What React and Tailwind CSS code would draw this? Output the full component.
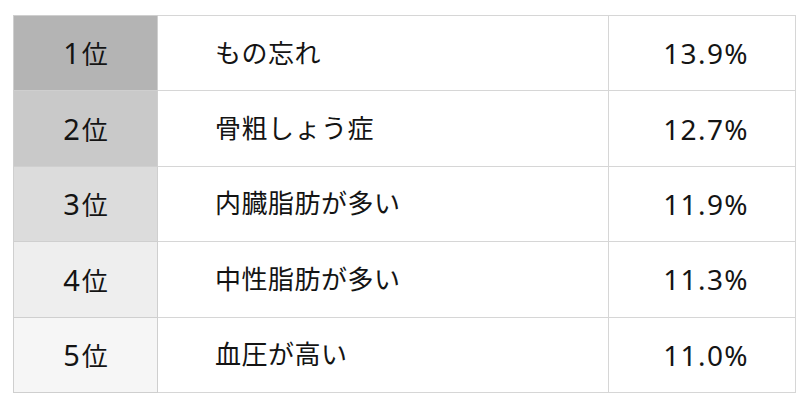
const rows = [
  { rank: '1', name: 'もの忘れ', value: '13.9%', bg: 'bg-[#b4b4b4]' },
  { rank: '2', name: '骨粗しょう症', value: '12.7%', bg: 'bg-[#c9c9c9]' },
  { rank: '3', name: '内臓脂肪が多い', value: '11.9%', bg: 'bg-[#dcdcdc]' },
  { rank: '4', name: '中性脂肪が多い', value: '11.3%', bg: 'bg-[#eeeeee]' },
  { rank: '5', name: '血圧が高い', value: '11.0%', bg: 'bg-[#f6f6f6]' },
]

export default function App() {
  return (
    <div className="w-[808px] h-[408px] bg-white pt-[15px] pl-[13px] font-['Noto_Sans','Noto_Sans_CJK_JP',sans-serif] text-[#141414]">
      <table className="border-collapse w-[782px] table-fixed">
        <colgroup>
          <col className="w-[144px]" />
          <col className="w-[451px]" />
          <col className="w-[187px]" />
        </colgroup>
        <tbody>
          {rows.map((r) => (
            <tr key={r.rank} className="h-[75.4px]">
              <td className={`border border-[#cfcfcf] ${r.bg} text-center text-[26px]`}>
                <span className="text-[29px] tracking-[0.06em]">{r.rank}</span>位
              </td>
              <td className="border border-[#d6d6d6] pl-[57px] text-[26px] tracking-[0.02em]">
                {r.name}
              </td>
              <td className="border border-[#d6d6d6] text-right pr-[46px] text-[28px] tracking-[0.05em]">
                {r.value}
              </td>
            </tr>
          ))}
        </tbody>
      </table>
    </div>
  )
}
